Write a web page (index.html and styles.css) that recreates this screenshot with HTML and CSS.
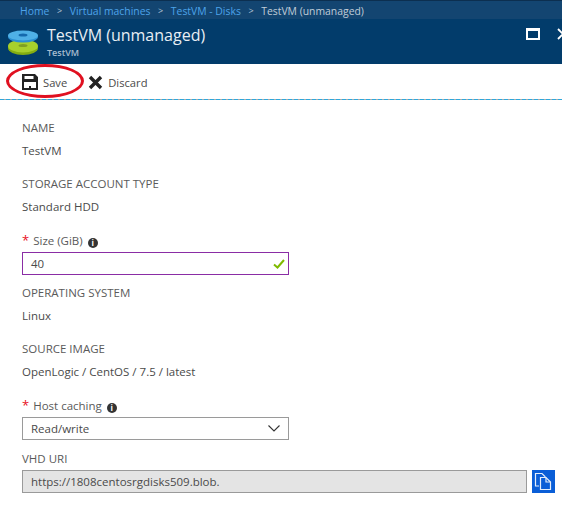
FILE: index.html
```html
<!DOCTYPE html>
<html lang="en">
<head>
    <meta charset="UTF-8">
    <meta name="viewport" content="width=device-width, initial-scale=1.0">
    <title>TestVM (unmanaged)</title>
    <link rel="stylesheet" href="styles.css">
</head>
<body>
    <nav class="crumbs">
        <a>Home</a><i>&gt;</i><a>Virtual machines</a><i>&gt;</i><a>TestVM - Disks</a><i>&gt;</i><span>TestVM (unmanaged)</span>
    </nav>
    <header class="blade-head">
        <svg class="disk-icon" width="32" height="28" viewBox="0 0 32 28">
            <ellipse cx="16" cy="20" rx="15" ry="7" fill="#84ad12"/>
            <ellipse cx="16" cy="18" rx="15" ry="6.500" fill="#a8d02c"/>
            <ellipse cx="16" cy="17.500" rx="4.500" ry="1.600" fill="#7f9f22"/>
            <ellipse cx="16" cy="9" rx="15" ry="5.500" fill="#2b8fd2"/>
            <ellipse cx="16" cy="7.500" rx="15" ry="5" fill="#4fb0e6"/>
            <ellipse cx="16" cy="7" rx="4.500" ry="1.600" fill="#1469ad"/>
        </svg>
        <div class="titles">
            <h1>TestVM (unmanaged)</h1>
            <p>TestVM</p>
        </div>
        <div class="win-btns">
            <span class="maximize"></span>
            <svg width="12" height="12" viewBox="0 0 12 12"><path d="M1 1l10 10M11 1L1 11" stroke="#fff" stroke-width="1.800"/></svg>
        </div>
    </header>
    <div class="toolbar">
        <button class="tool">
            <svg width="16" height="16" viewBox="0 0 16 16"><path fill-rule="evenodd" d="M0 0h13l3 3v13H0zM2.500 2v3h9V2zM2 8v6h5v-2h2v2h5V8z" fill="#222"/></svg>
            Save
        </button>
        <button class="tool">
            <svg width="15" height="15" viewBox="0 0 15 15"><path d="M2 2l11 11M13 2L2 13" stroke="#222" stroke-width="3.400"/></svg>
            Discard
        </button>
        <!-- red ring drawn on the screenshot -->
        <span class="ring"></span>
    </div>

    <main class="form">
        <div class="field">
            <div class="label">NAME</div>
            <div class="value">TestVM</div>
        </div>
        <div class="field">
            <div class="label">STORAGE ACCOUNT TYPE</div>
            <div class="value">Standard HDD</div>
        </div>
        <div class="field short">
            <div class="label"><b>*</b>Size (GiB)<span class="info">i</span></div>
            <div class="box active">40
                <svg width="12" height="10" viewBox="0 0 12 10"><path d="M1 5.500l3.500 3L11 1" fill="none" stroke="#7fba00" stroke-width="2"/></svg>
            </div>
        </div>
        <div class="field">
            <div class="label">OPERATING SYSTEM</div>
            <div class="value">Linux</div>
        </div>
        <div class="field">
            <div class="label">SOURCE IMAGE</div>
            <div class="value">OpenLogic / CentOS / 7.5 / latest</div>
        </div>
        <div class="field short">
            <div class="label"><b>*</b>Host caching<span class="info">i</span></div>
            <div class="box">Read/write
                <svg width="12" height="7" viewBox="0 0 12 7"><path d="M.5.500L6 6 11.500.500" fill="none" stroke="#333" stroke-width="1.100"/></svg>
            </div>
        </div>
        <div class="field">
            <div class="label uri">VHD URI</div>
            <div class="uri-row">
                <div class="box readonly">https://1808centosrgdisks509.blob.</div>
                <button class="copy">
                    <svg width="19" height="19" viewBox="0 0 19 19" fill="none" stroke="#e4eefb" stroke-width="1.200"><path d="M5 14H1.500V1.500H8l3 3v1"/><path fill="#0a5ed7" d="M6.500 5.500H12l4.500 4.500v7.500h-10z"/><path d="M12 5.500V10h4.500"/></svg>
                </button>
            </div>
        </div>
    </main>
</body>
</html>
```
FILE: styles.css
```css
*{
    margin: 0;
    padding: 0;
    box-sizing: border-box;
}
html,body{
    height: 100%;
    overflow: hidden;
}
body{
    background: #fff;
    color: #4a4a4a;
    font-family: "Open Sans", "Noto Sans", sans-serif;
    font-size: 11.500px;
}
.crumbs{
    height: 19px;
    padding: 1px 0 0 20px;
    background: #134571;
    border-top: 1px solid #0c2f50;
    display: flex;
    align-items: center;
    color: #c0ccd8;
    font-size: 10.400px;
    white-space: nowrap;
}
.crumbs a{
    color: #4da3ea;
}
.crumbs i{
    font-style: normal;
    margin: 0 7.600px;
    color: #b9c8d6;
    font-size: 9px;
}
.blade-head{
    height: 45px;
    background: #023c6b;
    padding-left: 7px;
    display: flex;
    align-items: flex-start;
    color: #fff;
    overflow: hidden;
}
.disk-icon{
    margin-top: 9px;
    flex: none;
}
.titles{
    margin-left: 8px;
}
.blade-head h1{
    font-size: 16px;
    font-weight: 400;
    line-height: 22px;
    margin-top: 5px;
    color: #e8eef4;
}
.blade-head p{
    font-size: 9px;
    font-weight: 600;
    line-height: 13px;
    color: #a9bdd0;
}
.win-btns{
    margin-left: auto;
    margin-right: -7px;
    margin-top: 9px;
    display: flex;
    gap: 17px;
}
.maximize{
    width: 14px;
    height: 12px;
    border: 2px solid #fff;
    border-top-width: 3px;
}
.toolbar{
    height: 36px;
    padding-left: 22px;
    background: repeating-linear-gradient(90deg, #2fa8dc 0 4px, #a8a8a8 4px 6px) left bottom / 100% 1px no-repeat;
    display: flex;
    align-items: center;
    gap: 21px;
    position: relative;
}
.tool{
    display: flex;
    align-items: center;
    gap: 5px;
    background: none;
    border: 0;
    font: inherit;
    font-size: 11.200px;
    color: #4a4a4a;
}
.ring{
    position: absolute;
    left: 6px;
    top: 0;
    width: 78px;
    height: 34px;
    border: 3px solid #e01020;
    border-radius: 50%;
}
.form{
    padding: 22px 7px 0 22px;
}
.field{
    height: 56px;
}
.field.short{
    height: 53px;
}
.label{
    height: 12px;
    line-height: 12px;
    color: #5a5a5a;
    white-space: nowrap;
}
.value{
    margin-top: 10px;
    line-height: 13px;
}
.field.short .label{
    margin-bottom: 6px;
}
.label b{
    color: #e81123;
    font-weight: 400;
    font-size: 13px;
    margin-right: 4px;
}
.info{
    display: inline-block;
    width: 10px;
    height: 10px;
    margin-left: 5px;
    border-radius: 50%;
    background: #333;
    color: #fff;
    font-size: 8px;
    font-weight: 700;
    line-height: 10px;
    text-align: center;
    vertical-align: -1px;
}
.box{
    height: 23px;
    width: 267px;
    padding: 0 8px;
    border: 1px solid #9a9a9a;
    display: flex;
    align-items: center;
    justify-content: space-between;
}
.box.active{
    border-color: #8a2da5;
    padding-right: 3px;
}
.box.readonly{
    width: 505px;
    background: #e4e4e4;
}
.label.uri{
    margin-top: 1px;
    margin-bottom: 5px;
}
.uri-row{
    display: flex;
    gap: 5px;
}
.copy{
    width: 23px;
    height: 23px;
    background: #0a5ed7;
    border: 0;
    display: flex;
    align-items: center;
    justify-content: center;
}
```
